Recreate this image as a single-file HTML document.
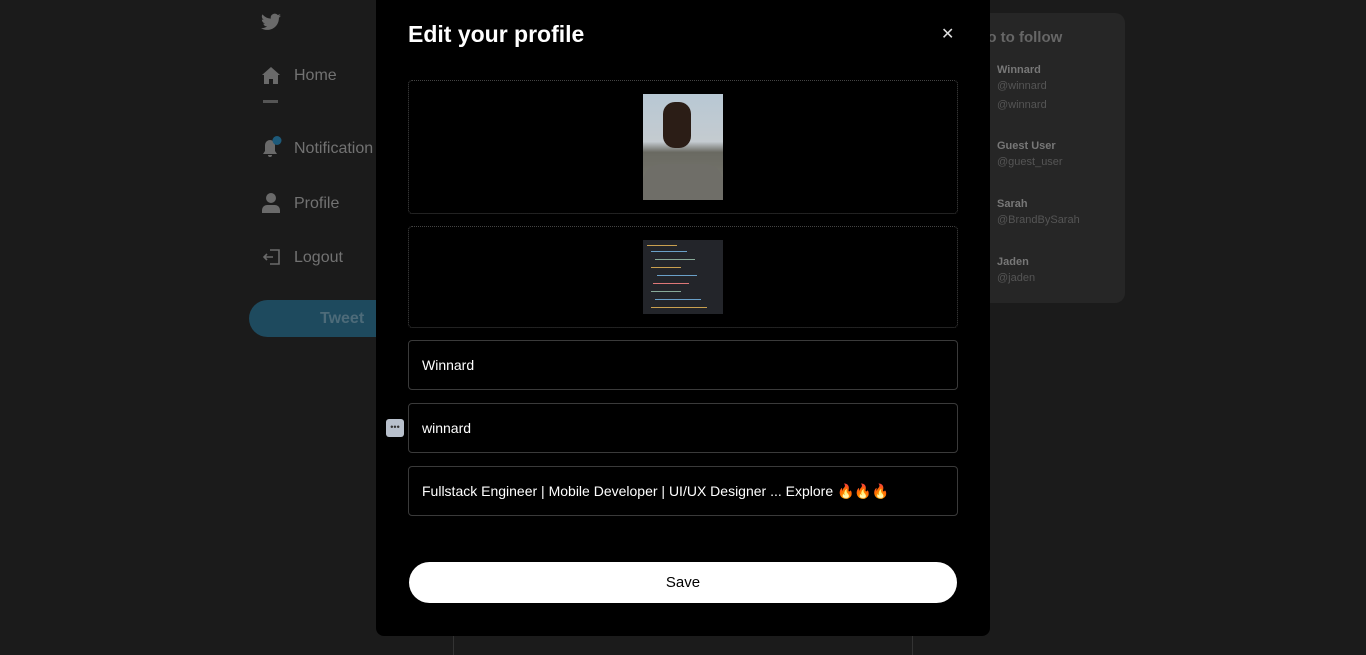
<!DOCTYPE html>
<html><head><style>
body{margin:0;width:1366px;height:655px;background:#1b1b1b;font-family:"Liberation Sans",sans-serif;position:relative;overflow:hidden}
.a{position:absolute}
.nav{color:#727272;font-size:16px}
.rp{left:900px;top:13px;width:225px;height:290px;background:#262626;border-radius:10px}
.n{color:#777;font-size:11px;font-weight:bold}
.h{color:#555;font-size:11px}
.modal{left:376px;top:0;width:614px;height:636px;background:#000;border-radius:0 0 8px 8px}
.box{left:32px;width:550px;border:1px dotted #444;border-radius:4px;box-sizing:border-box}
.inp{left:32px;width:550px;border:1px solid #3a3a3a;border-radius:4px;color:#fff;font-size:14px;line-height:48px;padding-left:13px;box-sizing:border-box;height:50px}
.cl{position:absolute;height:1px}
</style></head><body>
<div class="a" style="left:453px;top:600px;width:1px;height:55px;background:#333"></div>
<div class="a" style="left:912px;top:600px;width:1px;height:55px;background:#333"></div>
<svg class="a" style="left:261px;top:13px" width="20" height="18" viewBox="0 0 24 20"><path fill="#6a6a6a" d="M24 2.4a10 10 0 0 1-2.8.8A5 5 0 0 0 23.3.4a10 10 0 0 1-3.1 1.2A4.9 4.9 0 0 0 11.8 6 14 14 0 0 1 1.7.9a4.9 4.9 0 0 0 1.5 6.6A4.9 4.9 0 0 1 1 6.9a4.9 4.9 0 0 0 3.9 4.9 5 5 0 0 1-2.2.1 4.9 4.9 0 0 0 4.6 3.4A9.9 9.9 0 0 1 0 17.3 14 14 0 0 0 7.5 19.5c9.1 0 14-7.5 14-14v-.6A10 10 0 0 0 24 2.4z"/></svg>
<svg class="a" style="left:262px;top:67px" width="18" height="17" viewBox="0 0 18 17"><path fill="#6a6a6a" d="M9 0 0 8h2v9h5v-5h4v5h5V8h2z"/></svg>
<div class="a nav" style="left:294px;top:67px">Home</div>
<div class="a" style="left:263px;top:100px;width:15px;height:3px;background:#555"></div>
<svg class="a" style="left:262px;top:136px" width="20" height="22" viewBox="0 0 20 22"><path fill="#6a6a6a" d="M8 4a5 5 0 0 0-5 5v6l-2 3h14l-2-3V9a5 5 0 0 0-5-5zM6 19h4a2 2 0 0 1-4 0z"/><circle cx="15" cy="4.5" r="4.5" fill="#1d5a7a"/></svg>
<div class="a nav" style="left:294px;top:140px">Notification</div>
<svg class="a" style="left:262px;top:193px" width="18" height="20" viewBox="0 0 18 20"><circle cx="9" cy="5" r="5" fill="#6a6a6a"/><path fill="#6a6a6a" d="M0 20v-3a5 5 0 0 1 5-5h8a5 5 0 0 1 5 5v3z"/></svg>
<div class="a nav" style="left:294px;top:195px">Profile</div>
<svg class="a" style="left:263px;top:249px" width="17" height="16" viewBox="0 0 17 16"><path fill="none" stroke="#6a6a6a" stroke-width="1.6" d="M7 1h9v14H7M1 8h9M4 5 1 8l3 3"/></svg>
<div class="a nav" style="left:294px;top:249px">Logout</div>
<div class="a" style="left:249px;top:300px;width:200px;height:37px;border-radius:19px;background:#1e4a5e;color:#4d6b79;font-weight:bold;font-size:16px;line-height:37px;text-indent:71px">Tweet</div>
<div class="a rp">
<div class="a" style="left:64px;top:16px;color:#666;font-size:15px;font-weight:bold">Who to follow</div>
<div class="a n" style="left:97px;top:51px">Winnard</div><div class="a h" style="left:97px;top:67px">@winnard</div><div class="a h" style="left:97px;top:86px">@winnard</div>
<div class="a n" style="left:97px;top:127px">Guest User</div><div class="a h" style="left:97px;top:143px">@guest_user</div>
<div class="a n" style="left:97px;top:185px">Sarah</div><div class="a h" style="left:97px;top:201px">@BrandBySarah</div>
<div class="a n" style="left:97px;top:243px">Jaden</div><div class="a h" style="left:97px;top:259px">@jaden</div>
</div>
<div class="a modal">
<div class="a" style="left:32px;top:21px;color:#fff;font-size:23px;font-weight:bold">Edit your profile</div>
<div class="a" style="left:565px;top:24px;color:#ddd;font-size:16px">✕</div>
<div class="a box" style="top:80px;height:134px">
<div class="a" style="left:234px;top:13px;width:80px;height:106px;background:linear-gradient(#b8c8d4 0,#c4cbd0 45%,#6a6a62 55%,#7b7a72 100%)">
<div class="a" style="left:20px;top:8px;width:28px;height:46px;border-radius:12px;background:#2b1d16"></div>
<div class="a" style="left:0;top:70px;width:80px;height:36px;background:#6f6e68;border-radius:18px 18px 0 0"></div>
</div></div>
<div class="a box" style="top:226px;height:102px">
<div class="a" style="left:234px;top:13px;width:80px;height:74px;background:#23252a">
<div class="cl" style="left:4px;top:5px;width:30px;background:#c9a04f"></div>
<div class="cl" style="left:8px;top:11px;width:36px;background:#6aa0c8"></div>
<div class="cl" style="left:12px;top:19px;width:40px;background:#8a9"></div>
<div class="cl" style="left:8px;top:27px;width:30px;background:#c9a04f"></div>
<div class="cl" style="left:14px;top:35px;width:40px;background:#6aa0c8"></div>
<div class="cl" style="left:10px;top:43px;width:36px;background:#d77"></div>
<div class="cl" style="left:8px;top:51px;width:30px;background:#8a9"></div>
<div class="cl" style="left:12px;top:59px;width:46px;background:#6aa0c8"></div>
<div class="cl" style="left:8px;top:67px;width:56px;background:#c9a04f"></div>
</div></div>
<div class="a inp" style="top:340px">Winnard</div>
<div class="a inp" style="top:403px">winnard</div>
<div class="a inp" style="top:466px">Fullstack Engineer | Mobile Developer | UI/UX Designer ... Explore 🔥🔥🔥</div>
<div class="a" style="left:33px;top:562px;width:548px;height:41px;border-radius:21px;background:#fff;color:#000;font-size:15px;text-align:center;line-height:41px">Save</div>
</div>
<div class="a" style="left:386px;top:419px;width:18px;height:18px;border-radius:3px;background:#b8c0cc;color:#333;font-size:9px;line-height:17px;text-align:center">•••</div>
</body></html>
